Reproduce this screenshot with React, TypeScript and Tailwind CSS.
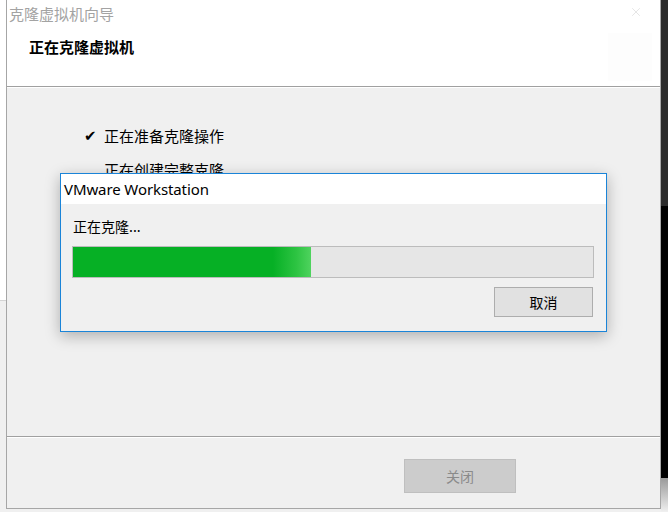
import { X } from "lucide-react";

const cjk = "font-['Microsoft_YaHei','Noto_Sans_CJK_SC',sans-serif]";

function ProgressDialog() {
    return (
        <div className="absolute left-[60px] top-[173px] w-[547px] h-[159px] border border-[#1a84d8] bg-[#f0f0f0] shadow-[0_4px_14px_rgba(0,0,0,0.28)] flex flex-col">
            <div className="h-[30px] bg-white flex items-center pl-[3px] text-[15px] text-black font-['Noto_Sans',sans-serif] tracking-[-0.1px]">
                VMware Workstation
            </div>
            <div className="flex flex-col pl-[11px] pr-[12px]">
                <div className={`${cjk} text-[14px] leading-[20px] mt-[12px] pl-[1px] text-black`}>正在克隆...</div>
                <div className="mt-[10px] w-[522px] h-[32px] border border-[#bcbcbc] bg-[#e6e6e6] flex">
                    <div className="w-[238px] h-full bg-[linear-gradient(to_right,#06b025_0%,#06b025_84%,#2ec443_94%,#4fd35e_100%)]" />
                </div>
                <div className="flex justify-end mt-[9px] pr-[1px]">
                    <button className={`${cjk} w-[99px] h-[30px] border border-[#adadad] bg-[#e1e1e1] text-[14px] text-black`}>
                        取消
                    </button>
                </div>
            </div>
        </div>
    );
}

export default function App() {
    return (
        <div className="relative w-[668px] h-[512px] overflow-hidden bg-[#f0f0f0] flex">
            <div className="w-[6px] flex flex-col">
                <div className="h-[301px] bg-white border-b border-[#d4d4d4]" />
                <div className="flex-1 bg-[#f0f0f0]" />
            </div>

            <div className="w-[655px] h-[509px] flex flex-col border-l border-r border-b border-[#a6a6a6] bg-[#f0f0f0]">
                <div className="h-[28px] bg-white flex items-center justify-between pl-[2px] pr-[17px]">
                    <span className={`${cjk} text-[15px] text-[#a3a3a3]`}>克隆虚拟机向导</span>
                    <X className="w-[14px] h-[14px] text-[#d2d2d2] mb-[4px]" strokeWidth={1} />
                </div>
                <div className="h-[58px] bg-white flex justify-between">
                    <div className={`${cjk} pl-[22px] pt-[9px] text-[15px] leading-[20px] font-bold text-black`}>正在克隆虚拟机</div>
                    <div className="w-[44px] h-[48px] mt-[5px] mr-[8px] bg-[#fdfdfd]" />
                </div>
                <div className="h-[2px] border-t border-[#a0a0a0] border-b border-b-white" />

                <div className={`${cjk} h-[348px] pt-[38px] pl-[77px] text-[15px] leading-[20px] text-black`}>
                    <div className="flex items-center">
                        <span className="w-[20px] text-[15px] font-['DejaVu_Sans',sans-serif]">✔</span>
                        <span>正在准备克隆操作</span>
                    </div>
                    <div className="flex items-center mt-[14px]">
                        <span className="w-[20px]" />
                        <span>正在创建完整克隆</span>
                    </div>
                </div>

                <div className="h-[2px] border-t border-[#a0a0a0] border-b border-b-white" />
                <div className="h-[70px] pt-[21px] pl-[397px]">
                    <button className={`${cjk} w-[112px] h-[34px] border border-[#bfbfbf] bg-[#cccccc] text-[14px] text-[#8a8a8a]`}>
                        关闭
                    </button>
                </div>
            </div>

            <div className="w-[7px] flex flex-col">
                <div className="h-[206px] bg-[#2b2b2b]" />
                <div className="h-[272px] bg-black" />
                <div className="flex-1 bg-[linear-gradient(to_bottom,#9a9a9a,#f0f0f0)]" />
            </div>

            <ProgressDialog />
        </div>
    );
}
